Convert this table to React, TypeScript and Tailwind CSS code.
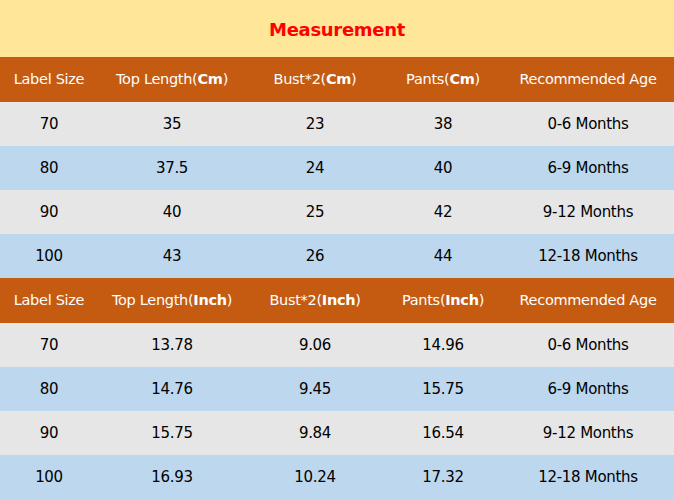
import React from 'react';

type Row = [string, string, string, string, string];

const cmRows: Row[] = [
  ['70', '35', '23', '38', '0-6 Months'],
  ['80', '37.5', '24', '40', '6-9 Months'],
  ['90', '40', '25', '42', '9-12 Months'],
  ['100', '43', '26', '44', '12-18 Months']
];

const inchRows: Row[] = [
  ['70', '13.78', '9.06', '14.96', '0-6 Months'],
  ['80', '14.76', '9.45', '15.75', '6-9 Months'],
  ['90', '15.75', '9.84', '16.54', '9-12 Months'],
  ['100', '16.93', '10.24', '17.32', '12-18 Months']
];

const cols = 'grid grid-cols-[98px_148px_138px_118px_172px]';

const HeaderRow: React.FC<{ unit: string }> = ({ unit }) => (
  <div className={`${cols} h-[45px] items-center bg-[#c55a11] text-center text-[14.5px] text-white`}>
    <span>Label Size</span>
    <span>
      Top Length(<b>{unit}</b>)
    </span>
    <span>
      Bust*2(<b>{unit}</b>)
    </span>
    <span>
      Pants(<b>{unit}</b>)
    </span>
    <span>Recommended Age</span>
  </div>
);

const DataRows: React.FC<{ rows: Row[] }> = ({ rows }) => (
  <>
    {rows.map((row, i) => (
      <div
        key={i}
        className={`${cols} h-[44px] items-center pt-px text-center text-[15px] text-black ${
          i % 2 === 0 ? 'bg-[#e7e6e6]' : 'bg-[#bdd7ee]'
        }`}
      >
        {row.map((cell, j) => (
          <span key={j}>{cell}</span>
        ))}
      </div>
    ))}
  </>
);

const App: React.FC = () => {
  return (
    <div className="w-[674px] h-[499px] font-['DejaVu_Sans',sans-serif] tracking-[-0.3px]">
      <div className="flex h-[57px] items-center justify-center bg-[#ffe699] pt-0.5">
        <p className="text-[18px] font-bold text-[#ff0000]">Measurement</p>
      </div>
      <HeaderRow unit="Cm" />
      <DataRows rows={cmRows} />
      <HeaderRow unit="Inch" />
      <DataRows rows={inchRows} />
    </div>
  );
};

export default App;
